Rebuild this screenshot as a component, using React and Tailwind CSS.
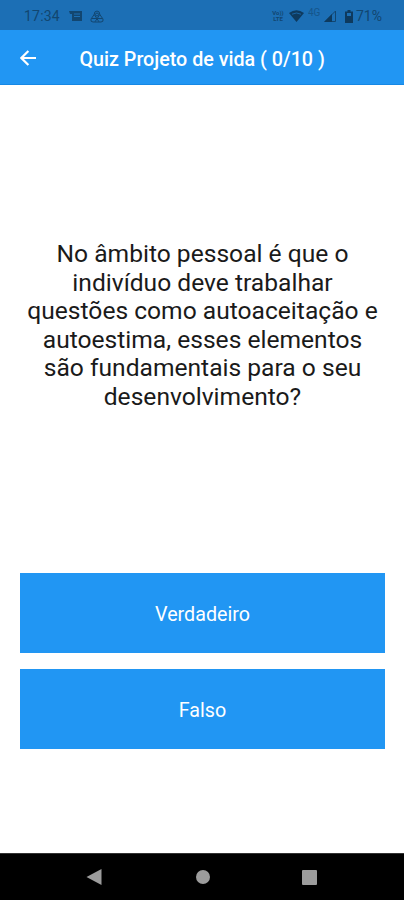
import React from "react";

const questionLines = [
  "No âmbito pessoal é que o",
  "indivíduo deve trabalhar",
  "questões como autoaceitação e",
  "autoestima, esses elementos",
  "são fundamentais para o seu",
  "desenvolvimento?",
];

function StatusBar() {
  return (
    <div className="flex h-[30px] shrink-0 items-center bg-[#1c6fb5] pt-[2px] text-[#124670]">
      <span className="ml-[24px] w-[45px] text-[14px] leading-none tracking-[0.2px]">17:34</span>
      <svg className="h-[11px] w-[13px]" viewBox="0 0 13 11">
        <path d="M0 0h13v10H3V3H1z" fill="currentColor" />
        <path d="M5 3h6M5 5.5h6" stroke="#1c6fb5" strokeWidth="1" />
      </svg>
      <svg className="ml-[8px] h-[13px] w-[14px]" viewBox="0 0 14 13" fill="none" stroke="currentColor" strokeWidth="1">
        <path d="M4.200 4.500Q4.200 1 7 1t2.800 3.500L13 9q.8 3-2 3H3Q.2 12 1 9z" />
        <path d="M4.200 4.500 9 11.800M9.800 4.500 5 11.800M2 8.500h10" />
        <circle cx="7" cy="4.500" r="1.500" />
      </svg>
      <span className="ml-auto flex w-[14px] flex-col text-center text-[6px] font-bold leading-[6px]">
        <span>Vo))</span>
        <span>LTE</span>
      </span>
      <svg className="ml-[4px] h-[12px] w-[15px]" viewBox="0 0 15 12">
        <path d="M0 3Q7.500-2.500 15 3L7.500 12z" fill="#0e3a5e" />
        <path d="M3 4.200Q7.500 1.800 12 4.200" fill="none" stroke="#1c6fb5" strokeWidth=".8" />
      </svg>
      <span className="ml-[4px] w-[14px] self-start pt-[6px] text-[10px] leading-none opacity-60">4G</span>
      <svg className="ml-[2px] h-[12px] w-[12px]" viewBox="0 0 12 12">
        <path d="M1 11.500H11.500V1z" fill="none" stroke="currentColor" />
        <path d="M0 12h8V4z" fill="#0e3a5e" />
      </svg>
      <svg className="ml-[9px] h-[13px] w-[8px]" viewBox="0 0 8 13">
        <path d="M2.500 0h3v1.500H8V13H0V1.500h2.500z" fill="#0e3a5e" />
        <path d="M2 3h4v3H2z" fill="#1c6fb5" />
      </svg>
      <span className="ml-[3px] mr-[22px] w-[26px] whitespace-nowrap text-[14px] leading-none">71%</span>
    </div>
  );
}

function AppBar() {
  return (
    <header className="flex h-[55px] shrink-0 items-center border-b border-[#1688e5] bg-[#2196f3] pt-[2px] text-white">
      <svg className="ml-[20px] h-[16px] w-[16px]" viewBox="0 0 16 16" fill="none" stroke="currentColor" strokeWidth="2.2">
        <path d="M16 8H1.600M8.400 1 1.400 8l7 7" />
      </svg>
      <h1 className="ml-[43.5px] whitespace-nowrap pt-[3px] text-[19.7px] font-medium leading-none">Quiz Projeto de vida ( 0/10 )</h1>
    </header>
  );
}

function Answer({ label }) {
  return (
    <button className="flex h-20 items-center justify-center bg-[#2196f3] pt-[4px] text-[19.7px] text-white">
      {label}
    </button>
  );
}

function NavigationBar() {
  return (
    <nav className="flex h-[47px] shrink-0 items-center border-t border-[#333] bg-black text-[#9c9c9c]">
      <svg className="ml-[86px] h-[16px] w-[16px]" viewBox="0 0 16 16" fill="currentColor">
        <path d="M.5 8 15.500 0v16z" />
      </svg>
      <span className="ml-[94px] size-[14px] rounded-full bg-current" />
      <span className="ml-[92px] size-[15px] rounded-[1px] bg-current" />
    </nav>
  );
}

export default function App() {
  return (
    <div className="flex h-[900px] w-[404px] flex-col overflow-hidden bg-white font-['Roboto',sans-serif]">
      <StatusBar />
      <AppBar />
      <main className="flex flex-1 flex-col">
        <p className="mt-[155px] flex-1 pl-[1px] text-center text-[24.6px] leading-[28.5px] text-[#1a1a1a]">
          {questionLines.map((line) => (
            <span key={line} className="block">{line}</span>
          ))}
        </p>
        <div className="mb-[104px] ml-[20px] mr-[19px] flex flex-col gap-4">
          <Answer label="Verdadeiro" />
          <Answer label="Falso" />
        </div>
      </main>
      <NavigationBar />
    </div>
  );
}
